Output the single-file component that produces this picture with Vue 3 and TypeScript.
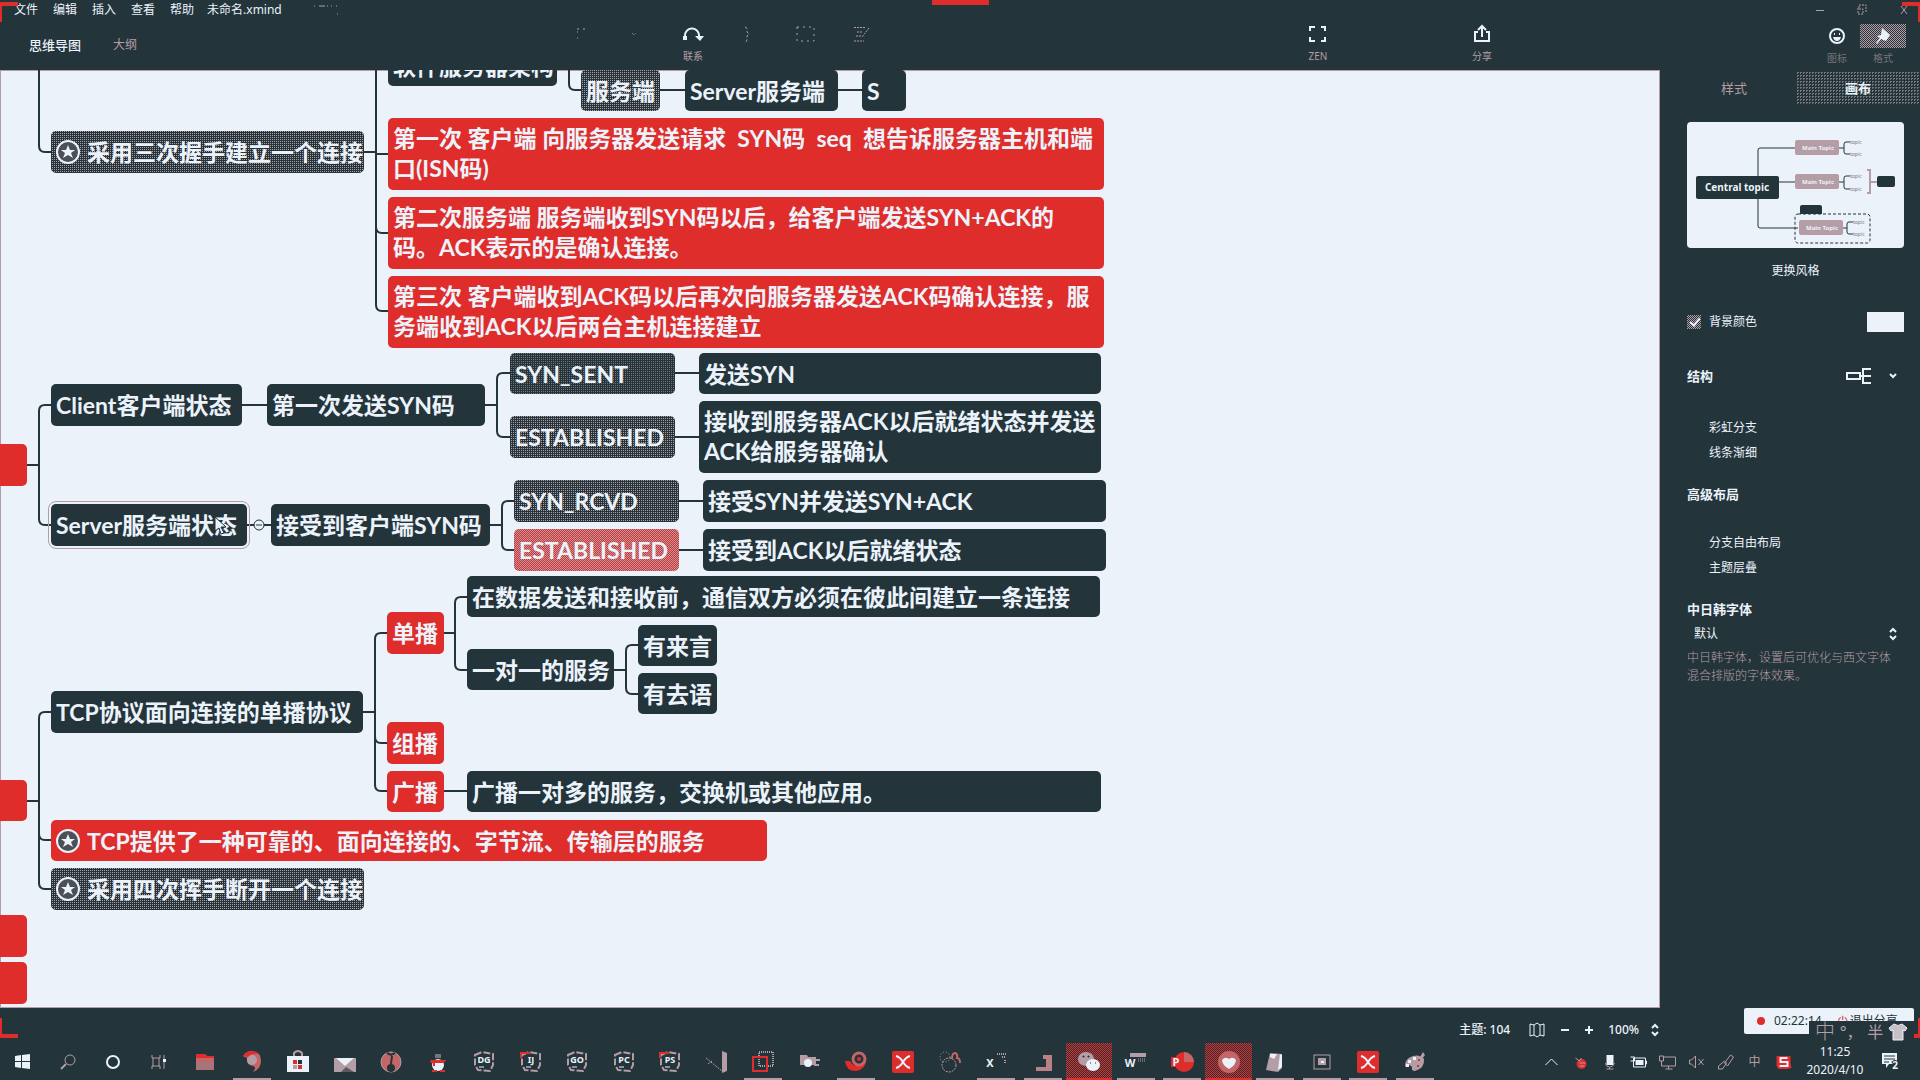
<script setup lang="ts">
import { ref } from 'vue'

type Tone = 'dark' | 'red' | 'grain' | 'sparse' | 'rose'

interface TopicNode {
  x: number
  y: number
  w: number
  h: number
  tone: Tone
  text: string
  star?: boolean
  selected?: boolean
}

const menus = ['文件', '编辑', '插入', '查看', '帮助']

const nodes: TopicNode[] = [
  { x: 388, y: -25, w: 169, h: 41, tone: 'dark', text: '软件服务器架构' },
  { x: 581, y: 0, w: 79, h: 41, tone: 'grain', text: '服务端' },
  { x: 685, y: 0, w: 153, h: 41, tone: 'dark', text: 'Server服务端' },
  { x: 862, y: 0, w: 44, h: 41, tone: 'dark', text: 'S' },
  { x: 51, y: 61, w: 313, h: 42, tone: 'grain', text: '采用三次握手建立一个连接', star: true },
  { x: 388, y: 48, w: 716, h: 72, tone: 'red', text: '第一次 客户端 向服务器发送请求  SYN码  seq  想告诉服务器主机和端\n口(ISN码)' },
  { x: 388, y: 127, w: 716, h: 72, tone: 'red', text: '第二次服务端 服务端收到SYN码以后，给客户端发送SYN+ACK的\n码。ACK表示的是确认连接。' },
  { x: 388, y: 206, w: 716, h: 72, tone: 'red', text: '第三次 客户端收到ACK码以后再次向服务器发送ACK码确认连接，服\n务端收到ACK以后两台主机连接建立' },
  { x: -20, y: 374, w: 47, h: 42, tone: 'red', text: '' },
  { x: 51, y: 314, w: 191, h: 42, tone: 'dark', text: 'Client客户端状态' },
  { x: 267, y: 314, w: 218, h: 42, tone: 'dark', text: '第一次发送SYN码' },
  { x: 510, y: 283, w: 165, h: 41, tone: 'sparse', text: 'SYN_SENT' },
  { x: 510, y: 346, w: 165, h: 42, tone: 'grain', text: 'ESTABLISHED' },
  { x: 699, y: 283, w: 402, h: 41, tone: 'dark', text: '发送SYN' },
  { x: 699, y: 331, w: 402, h: 72, tone: 'dark', text: '接收到服务器ACK以后就绪状态并发送\nACK给服务器确认' },
  { x: 51, y: 434, w: 196, h: 42, tone: 'dark', text: 'Server服务端状态', selected: true },
  { x: 271, y: 434, w: 219, h: 42, tone: 'dark', text: '接受到客户端SYN码' },
  { x: 514, y: 410, w: 165, h: 42, tone: 'grain', text: 'SYN_RCVD' },
  { x: 514, y: 459, w: 165, h: 42, tone: 'rose', text: 'ESTABLISHED' },
  { x: 703, y: 410, w: 403, h: 42, tone: 'dark', text: '接受SYN并发送SYN+ACK' },
  { x: 703, y: 459, w: 403, h: 42, tone: 'dark', text: '接受到ACK以后就绪状态' },
  { x: 467, y: 506, w: 633, h: 41, tone: 'dark', text: '在数据发送和接收前，通信双方必须在彼此间建立一条连接' },
  { x: 387, y: 542, w: 57, h: 42, tone: 'red', text: '单播' },
  { x: 467, y: 579, w: 147, h: 41, tone: 'dark', text: '一对一的服务' },
  { x: 638, y: 555, w: 79, h: 41, tone: 'dark', text: '有来言' },
  { x: 638, y: 603, w: 79, h: 41, tone: 'dark', text: '有去语' },
  { x: 51, y: 621, w: 312, h: 42, tone: 'dark', text: 'TCP协议面向连接的单播协议' },
  { x: 387, y: 652, w: 57, h: 42, tone: 'red', text: '组播' },
  { x: 387, y: 701, w: 57, h: 41, tone: 'red', text: '广播' },
  { x: 467, y: 701, w: 634, h: 41, tone: 'dark', text: '广播一对多的服务，交换机或其他应用。' },
  { x: -20, y: 710, w: 47, h: 41, tone: 'red', text: '' },
  { x: 51, y: 750, w: 716, h: 41, tone: 'red', text: 'TCP提供了一种可靠的、面向连接的、字节流、传输层的服务', star: true },
  { x: 51, y: 798, w: 313, h: 42, tone: 'grain', text: '采用四次挥手断开一个连接', star: true },
  { x: -20, y: 845, w: 47, h: 42, tone: 'red', text: '' },
  { x: -20, y: 892, w: 47, h: 42, tone: 'red', text: '' },
]

const place = (n: TopicNode) => ({
  left: `${n.x}px`,
  top: `${n.y}px`,
  width: `${n.w}px`,
  height: `${n.h}px`,
})

/** Rounded elbow from a vertical trunk at x to a child at (x2, y), coming from y1. */
const elbow = (x: number, y1: number, x2: number, y: number) => {
  const r = y > y1 ? -6 : 6
  return `M${x} ${y1}V${y + r}Q${x} ${y} ${x + 6} ${y}H${x2}`
}

const links: string[] = [
  elbow(39, 0, 51, 82),
  'M364 82H376', 'M376 84H389',
  elbow(376, 0, 389, 163), elbow(376, 0, 389, 241),
  elbow(569, 0, 581, 20), 'M660 20H685', 'M838 20H862',
  'M27 395H39', elbow(39, 395, 51, 335), elbow(39, 395, 51, 455),
  'M242 335H267', 'M485 335H497',
  elbow(497, 335, 510, 303), elbow(497, 335, 510, 367),
  'M675 303H699', 'M675 367H699',
  'M247 455H271', 'M490 455H502',
  elbow(502, 455, 514, 431), elbow(502, 455, 514, 480),
  'M679 431H703', 'M679 480H703',
  'M27 731H39', elbow(39, 731, 51, 642), elbow(39, 731, 51, 770), elbow(39, 731, 51, 819),
  'M363 642H375', elbow(375, 642, 387, 563), elbow(375, 642, 387, 673), elbow(375, 642, 387, 721),
  'M444 563H455', elbow(455, 563, 467, 527), elbow(455, 563, 467, 600),
  'M614 600H626', elbow(626, 600, 638, 575), elbow(626, 600, 638, 624),
  'M444 721H467',
]

interface TaskApp {
  id: string
  letters?: string
  open?: boolean
  active?: boolean
}

const apps: TaskApp[] = [
  { id: 'folder' }, { id: 'swirl', open: true }, { id: 'store' }, { id: 'mail' }, { id: 'music' }, { id: 'penguin' },
  { id: 'ide', letters: 'DG' }, { id: 'ide', letters: 'IJ' }, { id: 'ide', letters: 'GO' }, { id: 'ide', letters: 'PC' }, { id: 'ide', letters: 'PS' },
  { id: 'vs' }, { id: 'vm', open: true }, { id: 'tool' }, { id: 'snail', open: true }, { id: 'xmind' }, { id: 'rings' },
  { id: 'excel', open: true }, { id: 'bracket', open: true }, { id: 'wechat', active: true }, { id: 'word', open: true },
  { id: 'ppt', open: true }, { id: 'heart', active: true }, { id: 'note', open: true }, { id: 'frame', open: true },
  { id: 'xmind', open: true }, { id: 'paint', open: true },
]

const background = ref(true)
const rainbow = ref(false)
const taper = ref(false)
const freeBranch = ref(false)
const overlap = ref(false)
const font = ref('默认')
</script>

<template>
  <div class="screen">
    <header class="top">
      <nav class="menus">
        <button v-for="m in menus" :key="m" type="button">{{ m }}</button>
        <span class="file">未命名.xmind</span>
        <svg class="specks" width="26" height="12" viewBox="0 0 26 12"><path d="M1 2h1M6 2h6M14 2h1M18 2h1M23 2h1M24 10h1" stroke="#b49da5" /></svg>
        <span class="window-buttons">
          <button type="button" aria-label="最小化"><svg width="12" height="12" viewBox="0 0 12 12"><path d="M2 6.500h8" stroke="#b49da5" /></svg></button>
          <button type="button" aria-label="还原"><svg width="12" height="12" viewBox="0 0 12 12" fill="none"><path d="M3 4V1h7v7M2 4v6h5V5H2" stroke="#b49da5" stroke-dasharray="2 1" /></svg></button>
          <button type="button" aria-label="关闭"><svg width="12" height="12" viewBox="0 0 12 12"><path d="M3 2l6 8M9 2L3 10" stroke="#b49da5" /></svg></button>
        </span>
      </nav>
      <div class="toolbar">
        <div class="views">
          <button type="button" class="on">思维导图</button>
          <button type="button">大纲</button>
        </div>
        <div class="tools">
          <button type="button" aria-label="主题"><svg width="24" height="20" viewBox="0 0 24 20"><path d="M8 5h2M14 5h2M8 8h1M8 14h1" stroke="#b49da5" /></svg></button>
          <button type="button" aria-label="子主题"><svg width="24" height="20" viewBox="0 0 24 20"><path d="M7 9l2 2 2-2" stroke="#b49da5" stroke-dasharray="1 1" fill="none" /></svg></button>
          <button type="button">
            <svg width="24" height="20" viewBox="0 0 24 20"><path d="M4 13V12a7 7 0 0 1 14-1v3" fill="none" stroke="#ebf2fa" stroke-width="2" /><path d="M2 12h4v4H2zM14 12h9l-4 5z" fill="#ebf2fa" /></svg>
            <span>联系</span>
          </button>
          <button type="button" aria-label="概要"><svg width="24" height="20" viewBox="0 0 24 20"><path d="M8 3q2 0 2 3v2l2 2-2 2v3q0 3-2 3" stroke="#b49da5" stroke-dasharray="3 2" fill="none" /></svg></button>
          <button type="button" aria-label="外框"><svg width="24" height="20" viewBox="0 0 24 20"><rect x="4" y="3" width="17" height="14" stroke="#b49da5" stroke-dasharray="2 4" fill="none" /></svg></button>
          <button type="button" aria-label="笔记"><svg width="24" height="20" viewBox="0 0 24 20"><path d="M5 3.500h12M8 8h6M7 12h5M5 17h10M20 4l-7 9" stroke="#b49da5" stroke-dasharray="2 1" fill="none" /></svg></button>
        </div>
        <button type="button" class="zen">
          <svg width="20" height="20" viewBox="0 0 20 20"><path d="M2 7V3h5M13 3h4v4M17 13v4h-4M7 17H2v-4" fill="none" stroke="#ebf2fa" stroke-width="2" /></svg>
          <span>ZEN</span>
        </button>
        <button type="button" class="share">
          <svg width="20" height="20" viewBox="0 0 20 20"><path d="M6 8H3v9h14V8h-3M10 13V2M6 6l4-4 4 4" fill="none" stroke="#ebf2fa" stroke-width="2" /></svg>
          <span>分享</span>
        </button>
        <div class="modes">
          <button type="button">
            <i><svg width="18" height="18" viewBox="0 0 18 18"><circle cx="9" cy="9" r="7" fill="none" stroke="#ebf2fa" stroke-width="2" /><path d="M6 6h1v2H6zM11 6h1v2h-1zM5 10h8q-1 4-4 4t-4-4z" fill="#ebf2fa" /></svg></i>
            <span>图标</span>
          </button>
          <button type="button" class="active">
            <i><svg width="18" height="18" viewBox="0 0 18 18"><path d="M8 1l8 7-4 6-5-2-4 5-1-1 4-5-3-2 4-1z" fill="#ebf2fa" /></svg></i>
            <span>格式</span>
          </button>
        </div>
      </div>
    </header>

    <main class="work">
      <section class="left">
        <div class="canvas">
          <svg class="links" aria-hidden="true"><path v-for="(d, i) in links" :key="i" :d="d" /></svg>
          <div v-for="(n, i) in nodes" :key="i" class="node" :class="[n.tone, { two: n.text.includes('\n'), selected: n.selected }]" :style="place(n)">
            <svg v-if="n.star" class="star" width="26" height="26" viewBox="0 0 26 26">
              <circle cx="13" cy="13" r="11" fill="#4b4f56" stroke="#ebf2fa" stroke-width="2" />
              <path d="M13 6l2 5h5l-4 3 2 5-5-3-5 3 2-5-4-3h5z" fill="#ebf2fa" />
            </svg>
            <span>{{ n.text }}</span>
          </div>
          <svg class="collapse" width="14" height="14" viewBox="0 0 14 14"><circle cx="7" cy="7" r="5" fill="#ebf2fa" stroke="#23343a" /><path d="M4 7h6" stroke="#23343a" /></svg>
          <svg class="cursor" width="14" height="20" viewBox="0 0 14 20"><path d="M1 1v14l4-3 2 6 3-1-3-6h5z" fill="#ebf2fa" stroke="#23343a" /></svg>
        </div>
        <footer class="status">
          <span class="count">主题: 104</span>
          <button type="button" aria-label="导航图"><svg width="18" height="16" viewBox="0 0 18 16"><path d="M2 2l4 1 3-2 3 2 4-1v12l-4-1-3 2-3-2-4 1zM6 3v10M12 3v10" fill="none" stroke="#ebf2fa" /></svg></button>
          <button type="button" aria-label="缩小"><svg width="10" height="10" viewBox="0 0 10 10"><path d="M1 5h8" stroke="#ebf2fa" stroke-width="2" /></svg></button>
          <button type="button" aria-label="放大"><svg width="10" height="10" viewBox="0 0 10 10"><path d="M1 5h8M5 1v8" stroke="#ebf2fa" stroke-width="2" /></svg></button>
          <button type="button" class="percent">100%<svg width="10" height="14" viewBox="0 0 10 14"><path d="M2 5l3-3 3 3M2 9l3 3 3-3" fill="none" stroke="#ebf2fa" stroke-width="2" /></svg></button>
        </footer>
      </section>

      <aside class="panel">
        <div class="tabs">
          <button type="button">样式</button>
          <button type="button" class="on">画布</button>
        </div>
        <div class="body">
          <button type="button" class="theme">
            <svg viewBox="0 0 217 126" width="217" height="126">
              <g fill="none" stroke="#23343a"><path d="M71 54V28q0-2 2-2h36M91 60h18M71 76v28q0 2 2 2h38" /><path d="M152 26h5M163 20h-4q-2 0-2 2v8q0 2 2 2h4M152 60h5M163 54h-4q-2 0-2 2v9q0 2 2 2h4M156 106h4M166 100h-4q-2 0-2 2v8q0 2 2 2h4" /></g>
              <g fill="none" stroke="#b49da5"><path d="M180 48h3v23h-3M183 60h7" stroke-width="2" /></g>
              <rect x="108" y="92" width="75" height="29" rx="3" fill="none" stroke="#23343a" stroke-dasharray="3 2" />
              <rect x="9" y="54" width="83" height="23" rx="2" fill="#23343a" />
              <rect x="190" y="54" width="18" height="11" rx="2" fill="#23343a" />
              <path d="M113 92v-7q0-2 2-2h18q2 0 2 2v7z" fill="#23343a" />
              <g fill="#b49da5"><rect x="108" y="18" width="44" height="15" rx="2" /><rect x="108" y="52" width="44" height="15" rx="2" /><rect x="112" y="98" width="44" height="15" rx="2" /></g>
              <text x="50" y="69" class="central">Central topic</text>
              <g class="main"><text x="131" y="28">Main Topic</text><text x="131" y="62">Main Topic</text><text x="135" y="108">Main Topic</text></g>
              <g class="sub"><text x="163" y="22">topic</text><text x="163" y="34">topic</text><text x="163" y="56">topic</text><text x="163" y="69">topic</text><text x="166" y="102">topic</text><text x="166" y="114">topic</text></g>
            </svg>
            <span>更换风格</span>
          </button>
          <div class="row background">
            <label><input v-model="background" type="checkbox"><span>背景颜色</span></label>
            <button type="button" class="swatch" aria-label="选择背景颜色"></button>
          </div>
          <div class="row structure">
            <h3>结构</h3>
            <button type="button" aria-label="选择结构">
              <svg width="26" height="18" viewBox="0 0 26 18" fill="none"><path d="M1 6h13v6H1zM14 9h11M25 2h-8v14h8" stroke="#ebf2fa" stroke-width="2" /></svg>
              <svg width="10" height="8" viewBox="0 0 10 8" fill="none"><path d="M2 2l3 3 3-3" stroke="#ebf2fa" stroke-width="2" /></svg>
            </button>
          </div>
          <div class="options">
            <label><input v-model="rainbow" type="checkbox"><span>彩虹分支</span></label>
            <label><input v-model="taper" type="checkbox"><span>线条渐细</span></label>
          </div>
          <h3>高级布局</h3>
          <div class="options">
            <label><input v-model="freeBranch" type="checkbox"><span>分支自由布局</span></label>
            <label><input v-model="overlap" type="checkbox"><span>主题层叠</span></label>
          </div>
          <h3><label for="cjk-font">中日韩字体</label></h3>
          <div class="font">
            <select id="cjk-font" v-model="font"><option>默认</option></select>
            <svg width="10" height="14" viewBox="0 0 10 14"><path d="M2 5l3-3 3 3M2 9l3 3 3-3" fill="none" stroke="#ebf2fa" stroke-width="2" /></svg>
          </div>
          <p class="hint">中日韩字体，设置后可优化与西文字体混合排版的字体效果。</p>
        </div>
      </aside>
    </main>

    <footer class="taskbar">
      <div class="system">
        <button type="button" aria-label="开始"><svg width="18" height="18" viewBox="0 0 18 18"><path d="M1 3l6-1v6H1zM8 2l8-1v7H8zM1 9h6v6l-6-1zM8 9h8v7l-8-1z" fill="#ebf2fa" /></svg></button>
        <button type="button" aria-label="搜索"><svg width="18" height="18" viewBox="0 0 18 18"><circle cx="11" cy="7" r="5" fill="none" stroke="#b49da5" /><path d="M7 11l-5 5" stroke="#b49da5" stroke-width="2" /></svg></button>
        <button type="button" aria-label="小娜"><svg width="18" height="18" viewBox="0 0 18 18"><circle cx="9" cy="9" r="6" fill="none" stroke="#ebf2fa" stroke-width="2" /></svg></button>
        <button type="button" aria-label="任务视图"><svg width="18" height="18" viewBox="0 0 18 18"><path d="M3 2v3h8V2M3 16v-3h8v3M4 5v8M10 5v8M15 2v14" fill="none" stroke="#b49da5" /><path d="M14 6h3v3h-3z" fill="#ebf2fa" /></svg></button>
      </div>
      <div class="apps">
        <button v-for="(a, i) in apps" :key="i" type="button" :aria-label="a.letters ?? a.id" :class="{ open: a.open, active: a.active }">
          <svg width="24" height="24" viewBox="0 0 24 24">
            <template v-if="a.id === 'folder'"><path d="M3 4h9l2 2h7v14H3z" fill="#c46566" /><path d="M3 4h9l1 2h8v2H3z" fill="#df2d2b" /><path d="M3 12h18v7H3z" fill="#a4757b" /></template>
            <template v-else-if="a.id === 'swirl'"><path d="M3 6q3-5 9-5 9 1 9 10 0 8-8 11 4-5 0-6-7-1-6-8z" fill="#c46566" /><circle cx="12" cy="10" r="5" fill="#b49da5" /><path d="M3 6q4-5 9-5 4 0 6 3-6-1-10 3z" fill="#df2d2b" /></template>
            <template v-else-if="a.id === 'store'"><path d="M8 6V3q4-4 8 0v3" fill="none" stroke="#b49da5" stroke-width="2" /><path d="M1 6h22v16H1z" fill="#ebf2fa" /><path d="M7 10h4v4H7zM12 15h4v4h-4z" fill="#df2d2b" /><path d="M12 10h4v4h-4z" fill="#23343a" /><path d="M7 15h4v4H7z" fill="#b49da5" /></template>
            <template v-else-if="a.id === 'mail'"><path d="M1 8h22v14H1z" fill="#b49da5" /><path d="M3 8h18l-9 8z" fill="#ebf2fa" /><path d="M8 22l5-5 8 5z" fill="#5b5a61" /></template>
            <template v-else-if="a.id === 'music'"><circle cx="12" cy="12" r="10" fill="#c46566" stroke="#b49da5" /><circle cx="12" cy="18" r="4" fill="#23343a" /><path d="M8 3l4 2 4-2M13 6l-1 8" fill="none" stroke="#23343a" stroke-width="2" /></template>
            <template v-else-if="a.id === 'penguin'"><path d="M9 4h6v4H9z" fill="#77737a" /><circle cx="12" cy="15" r="6" fill="#ebf2fa" /><path d="M4 10h16l-2 3H9v3H7v-3H5zM6 20h5v2H6zM14 20h5v2h-5z" fill="#df2d2b" /></template>
            <template v-else-if="a.id === 'ide'"><path d="M3 5l7-3 11 2v11l-3 6-12-1-3-5z" fill="none" stroke="#b49da5" stroke-width="2" stroke-dasharray="7 2" /><path v-if="a.letters === 'IJ' || a.letters === 'PS'" d="M2 8V3h9" fill="none" stroke="#df2d2b" stroke-width="2" /><text x="12" y="13" class="letters">{{ a.letters }}</text><path d="M7 17h5" stroke="#ebf2fa" /></template>
            <template v-else-if="a.id === 'vs'"><path d="M17 1l5 2v18l-5 2z" fill="#b49da5" /><path d="M1 8l16 13M3 14l4-3" stroke="#b49da5" stroke-dasharray="2 1" /></template>
            <template v-else-if="a.id === 'vm'"><rect x="8" y="2" width="14" height="14" fill="none" stroke="#b49da5" stroke-width="2" stroke-dasharray="1 1" /><rect x="2" y="7" width="14" height="14" fill="none" stroke="#df2d2b" stroke-width="2" /></template>
            <template v-else-if="a.id === 'tool'"><path d="M2 5h7l1 2h8v8H2z" fill="#b49da5" /><circle cx="10" cy="13" r="4" fill="#ebf2fa" /><path d="M15 10h7M16 15h5" stroke="#b49da5" stroke-width="2" /></template>
            <template v-else-if="a.id === 'snail'"><path d="M1 11q1 10 11 10 8-1 10-9l-5 3q-7 3-11-4z" fill="#df2d2b" /><circle cx="15" cy="9" r="6" fill="none" stroke="#c46566" stroke-width="3" /><circle cx="15" cy="9" r="2" fill="#df2d2b" /></template>
            <template v-else-if="a.id === 'xmind'"><rect x="1" y="1" width="22" height="22" rx="2" fill="#df2d2b" /><path d="M5 6q4 1 7 6 3 5 7 6M19 6q-4 1-7 6-3 5-7 6" fill="none" stroke="#ebf2fa" stroke-width="2" /></template>
            <template v-else-if="a.id === 'rings'"><circle cx="11" cy="15" r="7" fill="none" stroke="#b49da5" stroke-dasharray="2 1" /><circle cx="7" cy="7" r="5" fill="none" stroke="#b49da5" stroke-dasharray="1 2" /><path d="M14 9q0-6 3-6 3 1 2 5 3 0 3 5" fill="none" stroke="#c46566" stroke-width="2" /></template>
            <template v-else-if="a.id === 'excel'"><text x="6" y="17" class="glyph">X</text><path d="M13 4h9M18 7h4M21 10v3" stroke="#b49da5" stroke-width="2" stroke-dasharray="1 1" /></template>
            <template v-else-if="a.id === 'bracket'"><path d="M12 5h9v16H5v-4h10V9h-3z" fill="#b98086" /></template>
            <template v-else-if="a.id === 'wechat'"><ellipse cx="9" cy="9" rx="8" ry="7" fill="#b49da5" /><path d="M6 6h1v1H6zM11 6h1v1h-1z" stroke="#23343a" /><ellipse cx="16" cy="15" rx="7" ry="6" fill="#ebf2fa" /><path d="M13 13h1M18 13h1" stroke="#23343a" /></template>
            <template v-else-if="a.id === 'word'"><text x="6" y="17" class="glyph">W</text><path d="M6 3h16v4H6z" fill="#b49da5" /><path d="M14 9h8M14 11h8" stroke="#b49da5" stroke-dasharray="1 1" /></template>
            <template v-else-if="a.id === 'ppt'"><circle cx="14" cy="12" r="10" fill="#df2d2b" /><path d="M14 2a10 10 0 0 1 10 10H14z" fill="#c46566" /><path d="M1 7h10v10H1z" fill="#df2d2b" /><text x="6" y="16" class="glyph">P</text></template>
            <template v-else-if="a.id === 'heart'"><circle cx="12" cy="12" r="11" fill="#c46566" /><path d="M12 19q-7-4-7-9 3-4 7-1 4-3 7 1 0 5-7 9z" fill="#ebf2fa" /></template>
            <template v-else-if="a.id === 'note'"><path d="M7 3l12 1v14l-4 4-12-2z" fill="#b49da5" /><path d="M17 4l2 1v12l-4 3zM7 4h7l-3 5-4-2z" fill="#ebf2fa" /></template>
            <template v-else-if="a.id === 'frame'"><rect x="4" y="5" width="16" height="14" fill="none" stroke="#b49da5" /><path d="M8 8h8v7H8z" fill="#b49da5" /><path d="M11 11h3v2h-3z" fill="#ebf2fa" /></template>
            <template v-else><path d="M17 7l3-5 2 3-3 4z" fill="#b49da5" /><path d="M2 17q-1-8 8-11 7-2 11 3 1 9-9 12-4 0-3-4-2-3-5-1z" fill="#b49da5" /><path d="M5 10h3v3H5zM10 7h3v3h-3zM3 14h3v3H3z" fill="#ebf2fa" /><path d="M15 9h2v2h-2zM14 15h2v2h-2z" fill="#df2d2b" /></template>
          </svg>
        </button>
      </div>
      <div class="tray">
        <svg width="18" height="18" viewBox="0 0 18 18"><path d="M3 12l6-6 6 6" fill="none" stroke="#ebf2fa" /></svg>
        <svg width="18" height="18" viewBox="0 0 18 18"><circle cx="10" cy="11" r="5" fill="#df2d2b" /><path d="M4 5l4 3 2-3M8 10h6M8 13h5" fill="none" stroke="#b49da5" /></svg>
        <svg width="18" height="18" viewBox="0 0 18 18"><rect x="6" y="2" width="7" height="10" fill="#ebf2fa" /><path d="M5 10q0 4 4 4t5-4M9 14v2M6 16h7" fill="none" stroke="#b49da5" /></svg>
        <svg width="18" height="18" viewBox="0 0 18 18"><path d="M4 5h12v9H4zM16 8h1v3h-1M1 4h4v4H1" fill="none" stroke="#ebf2fa" /><path d="M6 7h8v5H6z" fill="#ebf2fa" /></svg>
        <svg width="18" height="18" viewBox="0 0 18 18"><path d="M5 4h12v9H3V8M1 3h4v5H1zM7 16h7M10 13v3" fill="none" stroke="#b49da5" /></svg>
        <svg width="18" height="18" viewBox="0 0 18 18"><path d="M2 7h2l4-4v12l-4-4H2zM11 6l5 6M16 6l-5 6" fill="none" stroke="#b49da5" /></svg>
        <svg width="18" height="18" viewBox="0 0 18 18"><path d="M8 10L14 2l3 2-6 9zM2 13l6-5 2 2-4 6H2z" fill="none" stroke="#b49da5" /></svg>
        <span>中</span>
        <svg width="18" height="18" viewBox="0 0 18 18"><path d="M2 3h14v7l1 5-4 1H4l-2-3z" fill="#df2d2b" /><path d="M13 5H6v4h7v4H5" fill="none" stroke="#ebf2fa" stroke-width="2" /></svg>
      </div>
      <time class="clock"><span>11:25</span><span>2020/4/10</span></time>
      <button type="button" class="notice" aria-label="通知"><svg width="20" height="22" viewBox="0 0 20 22"><path d="M2 2h15v11H9l-3 4v-4H2z" fill="#ebf2fa" /><path d="M4 5h11M4 8h11M4 11h5" stroke="#23343a" /><text x="15" y="18" class="badge">2</text></svg></button>
    </footer>

    <div class="recorder">
      <i></i><span>02:22:14</span><button type="button"><b>⏻</b> 退出分享</button>
    </div>
    <div class="ime">
      <span class="lang">中</span><span>°，</span><span>半</span>
      <svg width="20" height="18" viewBox="0 0 20 18"><path d="M6 1q4 3 8 0l5 4-2 3-2-1v10H5V7L3 8 1 5z" fill="#c9bfc7" stroke="#ebf2fa" /></svg>
    </div>
    <div class="mark tl"></div>
    <div class="mark tr"></div>
    <div class="mark bl"></div>
    <div class="mark br"></div>
    <div class="handle"></div>
  </div>
</template>

<style>
body {
  margin: 0;
  background: #23343a;
}
</style>

<style scoped>
.screen {
  --dark: #23343a;
  --light: #ebf2fa;
  --red: #df2d2b;
  --mauve: #b49da5;
  position: relative;
  display: flex;
  flex-direction: column;
  min-height: 100vh;
  overflow: hidden;
  box-sizing: border-box;
  background: var(--dark);
  color: var(--light);
  font: 12px/18px "Noto Sans", "Noto Sans CJK SC", sans-serif;
}
button {
  margin: 0;
  padding: 0;
  border: 0;
  background: none;
  color: inherit;
  font: inherit;
}
svg {
  display: block;
  flex: none;
}
.top {
  height: 70px;
}
.menus {
  display: flex;
  align-items: center;
  gap: 15px;
  height: 20px;
  padding: 0 10px 0 14px;
}
.menus .file {
  margin-left: -2px;
}
.menus .specks {
  margin-left: 16px;
}
.window-buttons {
  display: flex;
  gap: 30px;
  margin-left: auto;
}
.toolbar {
  display: grid;
  grid-template-columns: 553px 336px 399fr 60px 104fr 60px 302fr 92px;
  height: 50px;
  padding-right: 14px;
}
.views {
  display: flex;
  align-items: center;
  gap: 32px;
  padding-left: 29px;
  color: var(--mauve);
}
.views .on {
  color: var(--light);
  font-size: 13px;
  font-weight: 500;
}
.tools {
  display: flex;
}
.tools button,
.zen,
.share {
  display: flex;
  flex-direction: column;
  align-items: center;
  gap: 4px;
  padding-top: 4px;
  width: 56px;
  color: var(--mauve);
  font-size: 10px;
  line-height: 16px;
}
.zen {
  grid-column: 4;
  width: 60px;
}
.share {
  grid-column: 6;
  width: 60px;
}
.modes {
  grid-column: 8;
  display: flex;
  color: #77737a;
  font-size: 10px;
  line-height: 16px;
}
.modes button {
  display: flex;
  flex-direction: column;
  align-items: center;
  gap: 2px;
  width: 46px;
  padding-top: 4px;
}
.modes i {
  display: flex;
  align-items: center;
  justify-content: center;
  width: 100%;
  height: 24px;
}
.modes .active i {
  background: conic-gradient(var(--mauve) 25%, transparent 0 50%, var(--mauve) 0 75%, transparent 0) 0 0 / 2px 2px;
}
.work {
  display: flex;
  flex: 1;
}
.left {
  display: flex;
  flex: 1;
  flex-direction: column;
  min-width: 0;
}
.canvas {
  position: relative;
  flex: 1;
  min-height: 936px;
  overflow: hidden;
  background: var(--light);
  box-shadow: inset 0 0 0 1px var(--mauve);
}
.links {
  position: absolute;
  inset: 0;
  width: 100%;
  height: 100%;
}
.links path {
  fill: none;
  stroke: var(--dark);
  stroke-width: 2;
}
.node {
  position: absolute;
  display: flex;
  align-items: center;
  gap: 6px;
  box-sizing: border-box;
  padding: 0 5px;
  border-radius: 5px;
  background-color: var(--dark);
  font: 700 23px/30px Lato, "Noto Sans CJK SC", sans-serif;
  white-space: pre;
}
.node.red {
  background-color: var(--red);
}
.node.two {
  align-items: flex-start;
  padding-top: 5px;
}
.node.grain {
  background-image: conic-gradient(var(--mauve) 25%, transparent 0);
  background-size: 2px 2px;
}
.node.sparse {
  background-image: conic-gradient(#77737a 25%, transparent 0);
  background-size: 2px 2px;
}
.node.rose {
  background-color: var(--red);
  background-image: conic-gradient(var(--mauve) 25%, transparent 0 50%, var(--mauve) 0 75%, transparent 0);
  background-size: 2px 2px;
}
.node.selected {
  outline: 1px solid var(--mauve);
  outline-offset: 2px;
}
.star {
  margin-left: -1px;
}
.collapse {
  position: absolute;
  left: 252px;
  top: 448px;
}
.cursor {
  position: absolute;
  left: 214px;
  top: 446px;
}
.status {
  display: flex;
  align-items: center;
  justify-content: flex-end;
  gap: 14px;
  height: 26px;
  padding: 9px 0 0;
  font-weight: 500;
}
.status .count {
  margin-right: 4px;
}
.status .percent {
  display: flex;
  align-items: center;
  gap: 11px;
}
.panel {
  display: flex;
  flex: 0 0 260px;
  flex-direction: column;
  box-sizing: border-box;
  padding: 2px 0 0 12px;
}
.tabs {
  display: flex;
}
.tabs button {
  flex: 1;
  height: 32px;
  color: var(--mauve);
  font-size: 13px;
}
.tabs .on {
  background: conic-gradient(#77737a 25%, transparent 0) 0 0 / 3px 3px;
  color: var(--light);
  font-weight: 700;
}
.body {
  display: flex;
  flex-direction: column;
  padding: 18px 16px 0 15px;
}
.theme {
  display: flex;
  flex-direction: column;
  align-items: center;
  gap: 14px;
}
.theme svg {
  border-radius: 4px;
  background: var(--light);
}
.theme text {
  font-family: "Noto Sans", sans-serif;
  text-anchor: middle;
}
.theme .central {
  fill: var(--light);
  font-size: 10px;
  font-weight: 700;
}
.theme .main {
  fill: var(--light);
  font-size: 6px;
  font-weight: 700;
}
.theme .sub {
  fill: #77737a;
  font-size: 5px;
}
.theme .sub text {
  text-anchor: start;
}
.row {
  display: flex;
  align-items: center;
  justify-content: space-between;
}
.background {
  margin-top: 32px;
}
label {
  display: flex;
  align-items: center;
  gap: 8px;
}
input[type="checkbox"] {
  width: 14px;
  height: 14px;
  margin: 0;
  appearance: none;
}
input[type="checkbox"]:checked {
  background: conic-gradient(var(--mauve) 25%, transparent 0 50%, var(--mauve) 0 75%, transparent 0) 0 0 / 2px 2px;
}
input[type="checkbox"]:checked::after {
  display: block;
  width: 4px;
  height: 8px;
  margin: 1px 0 0 5px;
  border: solid var(--light);
  border-width: 0 2px 2px 0;
  transform: rotate(40deg);
  content: "";
}
.swatch {
  width: 37px;
  height: 20px;
  background: var(--light);
}
h3 {
  margin: 0;
  font-size: 13px;
  font-weight: 700;
  line-height: 20px;
}
.structure {
  margin-top: 34px;
}
.structure button {
  display: flex;
  align-items: center;
  gap: 16px;
  padding-right: 6px;
}
.options {
  display: flex;
  flex-direction: column;
  gap: 7px;
  margin: 30px 0 22px;
}
.structure + .options {
  margin-top: 33px;
}
.font {
  display: flex;
  align-items: center;
  justify-content: space-between;
  height: 30px;
  padding-right: 6px;
}
.font select {
  flex: 1;
  padding: 0 0 0 7px;
  border: 0;
  appearance: none;
  background: none;
  color: inherit;
  font: inherit;
}
.hint {
  margin: 0;
  padding-right: 8px;
  color: var(--mauve);
  font-weight: 300;
}
.taskbar {
  display: flex;
  height: 37px;
}
.system {
  display: flex;
  flex: 0 0 180px;
}
.system button {
  display: flex;
  align-items: center;
  justify-content: center;
  width: 45px;
}
.apps {
  display: flex;
  flex: 0 1 1256px;
  padding-left: 2px;
}
.apps button {
  display: flex;
  flex: 1;
  align-items: center;
  justify-content: center;
  background: no-repeat 50% 100% / 38px 2px;
}
.apps .open {
  background-image: linear-gradient(var(--mauve), var(--mauve));
}
.apps .active {
  background: conic-gradient(var(--red) 25%, transparent 0 50%, var(--red) 0 75%, transparent 0) 0 0 / 2px 2px;
  box-shadow: inset 0 -2px var(--red);
}
.letters,
.glyph,
.badge {
  fill: var(--light);
  font: 700 9px "Noto Sans", sans-serif;
  text-anchor: middle;
}
.glyph {
  font-size: 11px;
}
.badge {
  stroke: var(--dark);
  stroke-width: 2px;
  paint-order: stroke;
  font-size: 10px;
}
.tray {
  display: flex;
  flex: 0 0 261px;
  align-items: center;
  margin-left: auto;
}
.tray > * {
  box-sizing: border-box;
  width: 29px;
}
.tray span {
  color: var(--mauve);
  text-align: center;
}
.clock {
  display: flex;
  flex: 0 0 74px;
  flex-direction: column;
  align-items: center;
}
.notice {
  display: flex;
  flex: 0 0 48px;
  align-items: center;
  padding-left: 8px;
  box-sizing: border-box;
}
.recorder {
  position: absolute;
  right: 6px;
  bottom: 46px;
  display: flex;
  align-items: center;
  box-sizing: border-box;
  width: 170px;
  height: 26px;
  padding-left: 13px;
  border-radius: 2px;
  background: var(--light);
  color: var(--dark);
}
.recorder i {
  width: 8px;
  height: 8px;
  margin-right: 9px;
  border-radius: 50%;
  background: var(--red);
}
.recorder button {
  margin-left: 16px;
}
.recorder b {
  color: var(--red);
  font-weight: 400;
}
.ime {
  position: absolute;
  right: 6px;
  bottom: 37px;
  display: flex;
  align-items: center;
  justify-content: space-between;
  box-sizing: border-box;
  width: 105px;
  height: 22px;
  padding: 0 6px;
  background: var(--dark);
  color: var(--mauve);
  font-size: 16px;
}
.ime .lang {
  font-size: 20px;
  font-weight: 300;
}
.mark {
  position: absolute;
  width: 18px;
  height: 20px;
  box-sizing: border-box;
  border: 0 solid var(--red);
}
.tl {
  top: 2px;
  left: 0;
  border-width: 4px 0 0 2px;
}
.tr {
  top: 2px;
  right: 0;
  border-width: 4px 2px 0 0;
}
.bl {
  bottom: 42px;
  left: 0;
  border-width: 0 0 4px 2px;
}
.br {
  right: 0;
  bottom: 42px;
  width: 6px;
  border-width: 0 2px 4px 0;
}
.handle {
  position: absolute;
  top: 0;
  left: 50%;
  width: 57px;
  height: 5px;
  margin-left: -28px;
  background: var(--red);
}
</style>
